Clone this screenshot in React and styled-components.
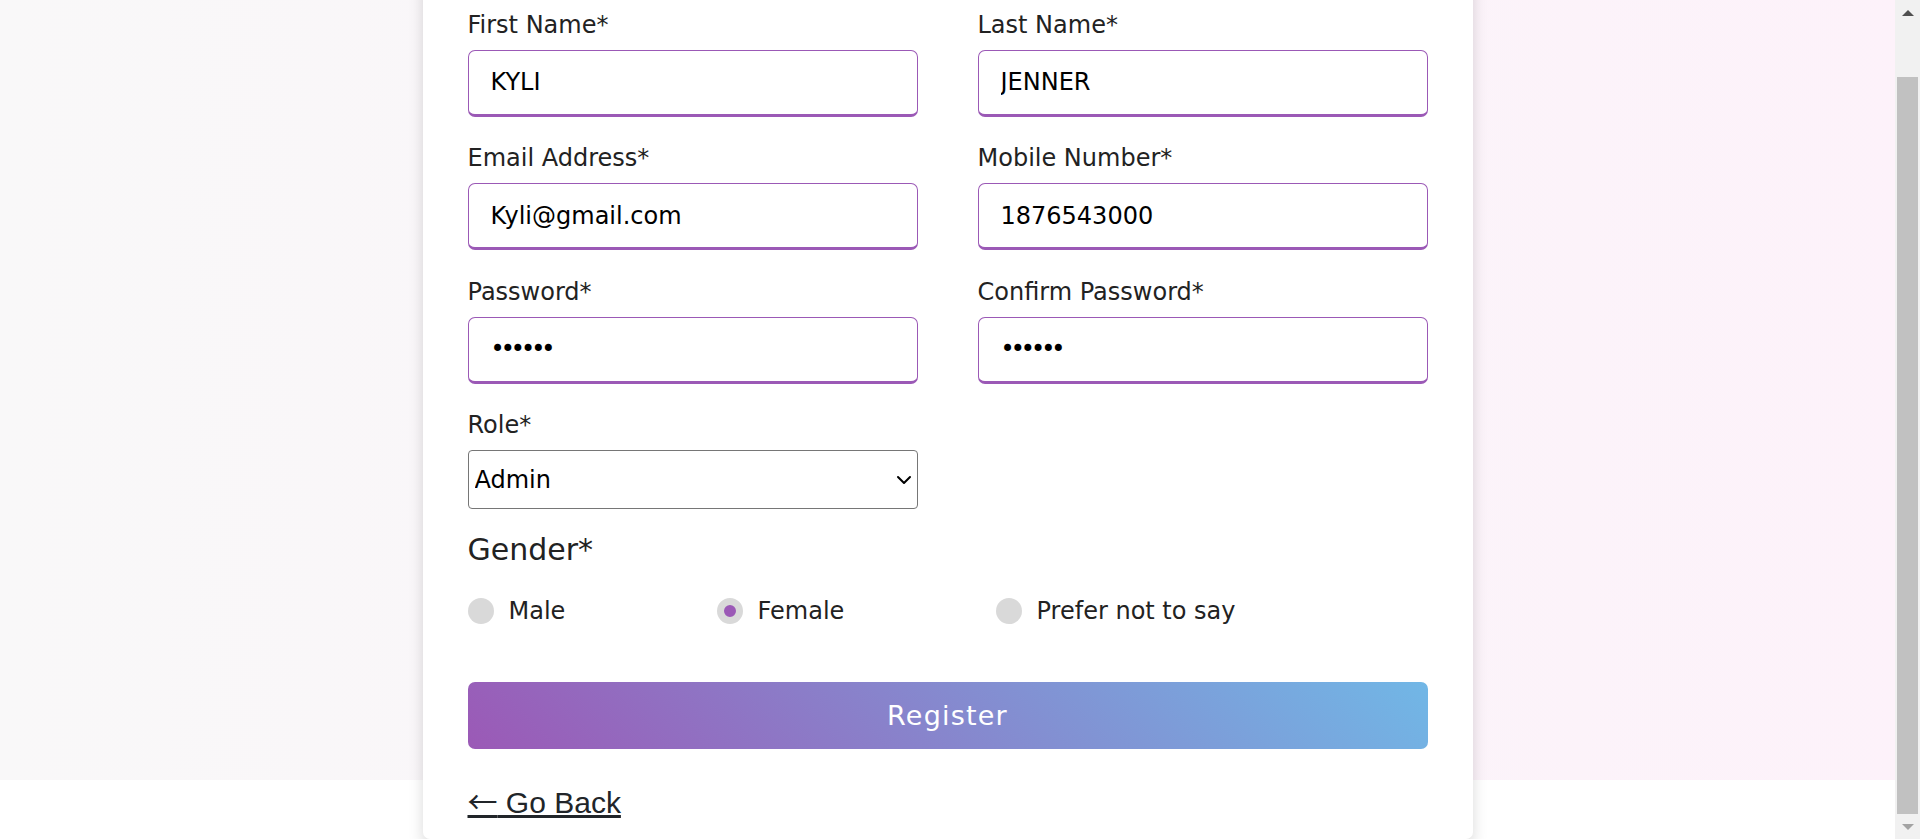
import React, { useLayoutEffect, useRef, useState } from "react";
import styled, { createGlobalStyle } from "styled-components";
import { ChevronDown } from "lucide-react";

const GlobalStyle = createGlobalStyle`
  *, *::before, *::after {
    box-sizing: border-box;
  }
  html, body {
    margin: 0;
    padding: 0;
    height: 100%;
    overflow: hidden;
    background: #fff;
  }
  body {
    font-family: "DejaVu Sans", "Liberation Sans", sans-serif;
    color: #222;
  }
`;

const Shell = styled.div`
  display: flex;
  height: 100vh;
`;

const Page = styled.div`
  flex: 1;
  height: 100vh;
  overflow-y: scroll;
  background: #fff;
  scrollbar-width: none;
  &::-webkit-scrollbar {
    display: none;
  }
`;

/* classic window scrollbar drawn beside the page */
const Rail = styled.div`
  width: 25px;
  flex-shrink: 0;
  display: flex;
  flex-direction: column;
  background: #f1f1f1;
`;

const RailButton = styled.div`
  height: 25px;
  display: flex;
  align-items: center;
  justify-content: center;
  &::after {
    content: "";
    border-left: 6px solid transparent;
    border-right: 6px solid transparent;
    ${(p) =>
      p.down
        ? "border-top: 6px solid #a3a3a3;"
        : "border-bottom: 6px solid #505050;"}
  }
`;

const Track = styled.div`
  flex: 1;
  padding: 0 2px;
`;

const Thumb = styled.div`
  background: #c1c1c1;
`;

const Section = styled.section`
  height: 100vh;
  display: flex;
  align-items: center;
  justify-content: center;
  background: linear-gradient(90deg, #f9f8f9 0%, #faf5f9 50%, #fdf2fa 100%);
`;

const Card = styled.div`
  flex-shrink: 0;
  width: 1050px;
  background: #fff;
  border-radius: 7px;
  padding: 125.3px 45px 18.5px;
  box-shadow: 0 7px 15px rgba(0, 0, 0, 0.15);
`;

const Fields = styled.div`
  display: grid;
  grid-template-columns: 450px 450px;
  column-gap: 60px;
  row-gap: 23.4px;
`;

const Field = styled.div`
  display: flex;
  flex-direction: column;
`;

const Label = styled.label`
  font-size: 24px;
  line-height: 36px;
  color: #222;
  margin-bottom: 7px;
`;

const Input = styled.input`
  height: 67px;
  width: 100%;
  border: 1px solid #9b59b6;
  border-bottom-width: 3px;
  border-radius: 7px;
  padding: 0 22px;
  font-family: "DejaVu Sans", sans-serif;
  font-size: 24px;
  color: #000;
  background: #fff;
  outline: none;
  letter-spacing: ${(p) => (p.type === "password" ? "-4px" : "normal")};
`;

const SelectWrap = styled.div`
  position: relative;
  svg {
    position: absolute;
    right: 2px;
    top: 50%;
    transform: translateY(-50%);
    pointer-events: none;
    color: #000;
  }
`;

const Select = styled.select`
  appearance: none;
  height: 59px;
  width: 100%;
  border: 1px solid #767676;
  border-radius: 4px;
  padding: 0 30px 0 6px;
  font-family: "DejaVu Sans", sans-serif;
  font-size: 24px;
  color: #000;
  background: #fff;
`;

const GenderTitle = styled.div`
  font-size: 30px;
  line-height: 45px;
  font-weight: 500;
  color: #222;
  margin-top: 18.4px;
`;

const Category = styled.div`
  display: flex;
  justify-content: space-between;
  width: 80%;
  margin-top: 21px;
`;

const Option = styled.label`
  display: flex;
  align-items: center;
  font-size: 24px;
  line-height: 36px;
  color: #222;
  cursor: pointer;
`;

const Dot = styled.span`
  width: 26px;
  height: 26px;
  border-radius: 50%;
  margin-right: 15px;
  border: 7px solid ${(p) => (p.checked ? "#d9d9d9" : "transparent")};
  background: ${(p) => (p.checked ? "#9b59b6" : "#d9d9d9")};
`;

const Button = styled.button`
  display: block;
  width: 100%;
  height: 67px;
  margin-top: 53px;
  border: none;
  border-radius: 7px;
  color: #fff;
  font-family: "DejaVu Sans", sans-serif;
  font-size: 27px;
  font-weight: 500;
  letter-spacing: 1.2px;
  background: linear-gradient(-135deg, #71b7e6, #9b59b6);
  cursor: pointer;
`;

const BackLink = styled.a`
  display: inline-block;
  margin-top: 37px;
  font-family: "Liberation Sans", Arial, sans-serif;
  font-size: 30px;
  line-height: 34.5px;
  color: #212529;
  text-decoration: underline;
`;

const Arrow = styled.span`
  font-family: "Noto Sans CJK SC", "DejaVu Sans", sans-serif;
  line-height: 0;
`;

const fields = [
  { label: "First Name*", value: "KYLI" },
  { label: "Last Name*", value: "JENNER" },
  { label: "Email Address*", value: "Kyli@gmail.com" },
  { label: "Mobile Number*", value: "1876543000" },
  { label: "Password*", value: "kyli12", type: "password" },
  { label: "Confirm Password*", value: "kyli12", type: "password" },
];

const genders = ["Male", "Female", "Prefer not to say"];

export default function App() {
  const pageRef = useRef(null);
  const trackRef = useRef(null);
  const [thumb, setThumb] = useState({ top: 0, height: 0 });

  useLayoutEffect(() => {
    const el = pageRef.current;
    const track = trackRef.current;
    if (!el || !track) return;
    el.scrollTop = el.scrollHeight;
    const len = track.clientHeight;
    setThumb({
      top: (el.scrollTop / el.scrollHeight) * len,
      height: (el.clientHeight / el.scrollHeight) * len,
    });
  }, []);

  return (
    <>
      <GlobalStyle />
      <Shell>
        <Page ref={pageRef}>
          <Section>
            <Card>
              <form onSubmit={(e) => e.preventDefault()}>
                <Fields>
                  {fields.map((f) => (
                    <Field key={f.label}>
                      <Label>{f.label}</Label>
                      <Input type={f.type || "text"} defaultValue={f.value} />
                    </Field>
                  ))}
                  <Field>
                    <Label>Role*</Label>
                    <SelectWrap>
                      <Select defaultValue="Admin">
                        <option>Admin</option>
                        <option>User</option>
                      </Select>
                      <ChevronDown size={24} strokeWidth={2} />
                    </SelectWrap>
                  </Field>
                </Fields>
                <GenderTitle>Gender*</GenderTitle>
                <Category>
                  {genders.map((g) => (
                    <Option key={g}>
                      <Dot checked={g === "Female"} />
                      {g}
                    </Option>
                  ))}
                </Category>
                <Button type="submit">Register</Button>
              </form>
              <BackLink href="#">
                <Arrow>←</Arrow> Go Back
              </BackLink>
            </Card>
          </Section>
        </Page>
        <Rail>
          <RailButton />
          <Track ref={trackRef}>
            <Thumb style={{ marginTop: thumb.top, height: thumb.height }} />
          </Track>
          <RailButton down />
        </Rail>
      </Shell>
    </>
  );
}
